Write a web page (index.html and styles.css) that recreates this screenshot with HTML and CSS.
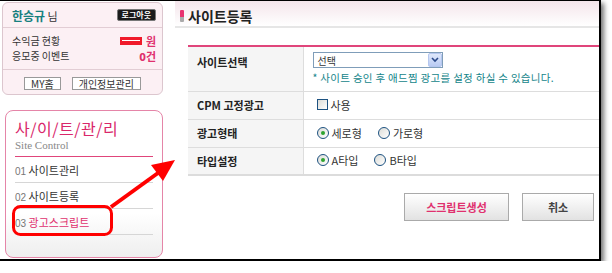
FILE: index.html
```html
<!DOCTYPE html>
<html>
<head>
	<meta charset="utf-8">
	<title>사이트등록</title>
	<link rel="stylesheet" href="styles.css">
</head>
<body>
	<div class="frame">
		<aside class="side">
			<div class="user-box">
				<div class="user-top">
					<span><b class="uname">한승규</b> 님</span>
					<span class="logout">로그아웃</span>
				</div>
				<div class="stats">
					<div class="stat"><span>수익금 현황</span><span class="val"><i class="redact"></i>원</span></div>
					<div class="stat"><span>응모중 이벤트</span><span class="val"><b>0</b>건</span></div>
				</div>
				<div class="user-btns">
					<span class="sbtn">MY홈</span>
					<span class="sbtn">개인정보관리</span>
				</div>
			</div>
			<div class="menu-box">
				<h3>사/이/트/관/리</h3>
				<p class="sub">Site Control</p>
				<ul class="menu">
					<li><span class="no">01</span> 사이트관리</li>
					<li><span class="no">02</span> 사이트등록</li>
					<li class="on"><span class="no">03</span> 광고스크립트</li>
				</ul>
			</div>
		</aside>
		<main class="main">
			<div class="head">
				<span class="head-icon"></span>
				<h2>사이트등록</h2>
			</div>
			<table class="form">
				<tr class="r1">
					<th>사이트선택</th>
					<td>
						<div class="select"><span>선택</span><i class="sel-btn"><svg width="8" height="6" viewBox="0 0 8 6"><path d="M1 1 L4 4 L7 1" fill="none" stroke="#2b4a8a" stroke-width="1.6"/></svg></i></div>
						<p class="note">* 사이트 승인 후 애드찜 광고를 설정 하실 수 있습니다.</p>
					</td>
				</tr>
				<tr>
					<th>CPM 고정광고</th>
					<td><label class="opt"><i class="chk"></i>사용</label></td>
				</tr>
				<tr>
					<th>광고형태</th>
					<td><label class="opt"><i class="rad on"></i>세로형</label><label class="opt"><i class="rad"></i>가로형</label></td>
				</tr>
				<tr>
					<th>타입설정</th>
					<td><label class="opt"><i class="rad on"></i>A타입</label><label class="opt"><i class="rad"></i>B타입</label></td>
				</tr>
			</table>
			<div class="actions">
				<span class="btn btn-pink">스크립트생성</span>
				<span class="btn btn-cancel">취소</span>
			</div>
		</main>
	</div>
	<svg class="annot" width="612" height="273" viewBox="0 0 612 273">
		<rect x="13.5" y="206.5" width="98" height="28" rx="7" fill="none" stroke="#f00" stroke-width="3"/>
		<line x1="111" y1="207" x2="158" y2="173" stroke="#f00" stroke-width="4"/>
		<polygon points="175,160 151,165 163,181" fill="#f00"/>
	</svg>
</body>
</html>
```

FILE: styles.css
```css
body {
	margin: 0;
	font-family: "Noto Sans CJK KR", "Noto Sans", sans-serif;
	font-size: 11px;
	color: #333;
	background: #fff;
}
.frame {
	width: 599px;
	height: 258px;
	border-top: 1px solid #000;
	border-right: 2px solid #000;
	border-bottom: 2px solid #000;
	box-shadow: 3px 3px 5px rgba(0, 0, 0, 0.55);
	display: flex;
	background: #fff;
}
.side {
	width: 165px;
	flex: none;
	padding: 1px 0 0 2px;
	box-sizing: border-box;
}

/* user box */
.user-box {
	width: 161px;
	height: 93px;
	box-sizing: border-box;
	border: 1px solid #dcc6ce;
	border-radius: 6px;
	background: #fcf0f4;
}
.user-top {
	height: 24px;
	display: flex;
	align-items: center;
	justify-content: space-between;
	padding: 0 6px 0 9px;
	border-bottom: 1px solid #e2cdd4;
}
.uname {
	color: #17807f;
	font-size: 12px;
}
.logout {
	background: #1b1b1b;
	color: #fff;
	font-size: 8px;
	font-weight: bold;
	line-height: 10px;
	padding: 0 4px;
	border: 1px solid #777;
	border-radius: 2px;
}
.stats {
	padding: 5px 6px 6px 9px;
	border-bottom: 1px solid #e2cdd4;
}
.stat {
	display: flex;
	justify-content: space-between;
	align-items: center;
	height: 15px;
	font-size: 10px;
	color: #333;
}
.val {
	color: #e0306e;
	font-weight: bold;
	font-size: 11px;
	display: flex;
	align-items: center;
}
.redact {
	display: inline-block;
	width: 22px;
	height: 6px;
	background: #f01a2a;
	border-top: 1px solid #f01a2a;
	border-bottom: 1px solid #f01a2a;
	box-shadow: inset 0 0 0 2px #f01a2a, inset 0 3px 0 #fff;
	margin-right: 4px;
}
.user-btns {
	display: flex;
	justify-content: center;
	gap: 11px;
	padding-top: 7px;
}
.sbtn {
	background: #fff;
	border: 1px solid #999;
	font-size: 10px;
	line-height: 11px;
	padding: 0 6px;
	color: #333;
}

/* menu box */
.menu-box {
	margin: 15px 0 0 3px;
	width: 158px;
	height: 148px;
	box-sizing: border-box;
	border: 1px solid #e585a8;
	border-radius: 8px;
	padding: 7px 9px 0 9px;
	background: linear-gradient(#fff 70%, #eee);
}
.menu-box h3 {
	margin: 0;
	color: #d9276a;
	font-size: 16px;
	font-weight: normal;
	line-height: 20px;
	letter-spacing: 0.5px;
}
.sub {
	margin: 0;
	font-family: "Liberation Serif", serif;
	color: #888;
	font-size: 11px;
	line-height: 14px;
	padding-bottom: 4px;
	border-bottom: 1px solid #e0457b;
}
.menu {
	list-style: none;
	margin: 0;
	padding: 0;
}
.menu li {
	height: 25px;
	line-height: 27px;
	border-bottom: 1px solid #d6d6d6;
	font-size: 11px;
	color: #333;
}
.menu .no {
	font-family: "Liberation Sans", sans-serif;
	color: #777;
	font-size: 10px;
}
.menu li.on {
	color: #e0306e;
}

/* main */
.main {
	flex: 1;
	display: flex;
	flex-direction: column;
}
.head {
	height: 25px;
	margin-left: 10px;
	display: flex;
	align-items: center;
	gap: 4px;
	padding-left: 5px;
	background: linear-gradient(#f4e5eb, #fff);
	border-bottom: 2px solid #e6e6e6;
}
.head-icon {
	width: 4px;
	height: 12px;
	background: linear-gradient(#e8326f 60%, #aaa 60%);
	border-radius: 1px;
	margin-top: 4px;
}
.head h2 {
	margin: 0;
	font-size: 14px;
	color: #222;
	margin-top: 4px;
}
.form {
	margin: 17px 0 0 23px;
	width: 411px;
	border-collapse: collapse;
	border-top: 2px solid #e0457b;
	border-bottom: 2px solid #dcdcdc;
}
.form th {
	width: 115px;
	background: #f5f5f5;
	text-align: left;
	font-size: 11px;
	font-weight: bold;
	color: #222;
	padding: 0 0 0 9px;
	border-right: 1px solid #ddd;
	height: 28px;
	box-sizing: border-box;
}
.form tr {
	border-bottom: 1px solid #ddd;
}
.form tr.r1 th {
	height: 45px;
	vertical-align: top;
	padding-top: 7px;
}
.form td {
	padding: 0 0 0 9px;
	font-size: 11px;
}
.form tr.r1 td {
	vertical-align: top;
	padding-top: 5px;
}
.select {
	width: 130px;
	height: 16px;
	box-sizing: border-box;
	border: 1px solid #7f9db9;
	display: flex;
	justify-content: space-between;
	align-items: center;
	padding-left: 4px;
	background: #fff;
}
.select span {
	font-size: 10px;
	color: #333;
}
.sel-btn {
	width: 14px;
	height: 14px;
	box-sizing: border-box;
	border: 1px solid #b5c7ef;
	background: linear-gradient(#dfe8fb, #b9cbf3);
	display: flex;
	align-items: center;
	justify-content: center;
	border-radius: 2px;
}
.note {
	margin: 2px 0 0 0;
	color: #14858a;
	font-size: 10.5px;
	letter-spacing: 0.3px;
}
.opt {
	display: inline-flex;
	align-items: center;
	margin-right: 12px;
	font-size: 11px;
	color: #333;
}
.chk {
	width: 11px;
	height: 11px;
	box-sizing: border-box;
	border: 1px solid #1d5281;
	background: linear-gradient(135deg, #dcdcd7, #fff);
	margin: 0 3px 0 4px;
}
.rad {
	width: 12px;
	height: 12px;
	box-sizing: border-box;
	border: 1px solid #1d5281;
	border-radius: 50%;
	background: linear-gradient(135deg, #dcdcd7, #fff);
	margin: 0 3px 0 4px;
	position: relative;
}
.rad.on::after {
	content: "";
	position: absolute;
	left: 3px;
	top: 3px;
	width: 4px;
	height: 4px;
	border-radius: 50%;
	background: #2fa32f;
}
.actions {
	display: flex;
	justify-content: flex-end;
	gap: 13px;
	margin-top: 17px;
	padding-right: 5px;
}
.btn {
	height: 28px;
	box-sizing: border-box;
	border: 1px solid #aaa;
	background: linear-gradient(#fff, #e2e2e2);
	display: flex;
	align-items: center;
	justify-content: center;
	font-size: 11px;
	font-weight: bold;
}
.btn-pink {
	width: 105px;
	color: #e0306e;
}
.btn-cancel {
	width: 72px;
	color: #444;
}
.annot {
	position: absolute;
	left: 0;
	top: 0;
	pointer-events: none;
}
```
